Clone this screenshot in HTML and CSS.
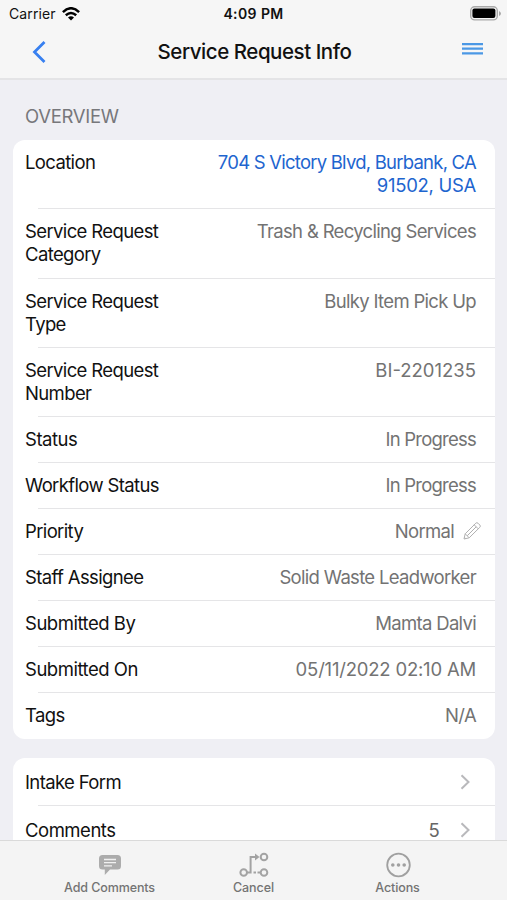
FILE: index.html
```html
<!DOCTYPE html>
<html lang="en">
<head>
<meta charset="utf-8">
<title>Service Request Info</title>
<link rel="stylesheet" href="styles.css">
</head>
<body>
<div class="app">
  <header class="top">
    <div class="status-bar">
      <div class="carrier"><span class="carrier-name">Carrier</span>
        <svg width="18" height="14" viewBox="0 0 18 14" fill="none" stroke="#000" stroke-width="2.5"><path d="M.9 5.1Q9-2.6 17.1 5.1M3.8 8.3Q9 3.8 14.2 8.300"/><path d="M6 10.500Q9 8 12 10.500L9 13.500Z" fill="#000" stroke="none"/></svg>
      </div>
      <span class="clock">4:09 PM</span>
      <svg class="battery" width="31" height="15" viewBox="0 0 31 15"><rect x=".7" y=".7" width="26.6" height="13.2" rx="4" fill="#f6f6f6" stroke="#a9a9a9" stroke-width="1.4"/><rect x="2.4" y="2.5" width="23" height="9.6" rx="2" fill="#000"/><path d="M29 5v5q2-1 2-2.5T29 5Z" fill="#a9a9a9"/></svg>
    </div>
    <div class="nav">
      <svg class="back" width="14" height="24" viewBox="0 0 14 24" fill="none" stroke="#3880f0" stroke-width="2.8"><path d="M12.500 2 2.500 12l10 10"/></svg>
      <h1 class="title">Service Request Info</h1>
      <svg class="menu" width="21" height="12" viewBox="0 0 21 12" fill="#4b98e5"><path d="M0 0h21v2.200H0zM0 4.600h21v2.200H0zM0 9.200h21v2.200H0z"/></svg>
    </div>
  </header>
  <main class="content">
    <h2 class="section">OVERVIEW</h2>
    <section class="card">
      <div class="row double"><span class="label">Location</span><a class="value link"><span class="tight">704 S Victory Blvd, Burbank, CA</span><br><span class="loose">91502, USA</span></a></div>
      <div class="row double"><span class="label">Service Request<br>Category</span><span class="value">Trash &amp; Recycling Services</span></div>
      <div class="row double"><span class="label">Service Request<br>Type</span><span class="value">Bulky Item Pick Up</span></div>
      <div class="row double"><span class="label">Service Request<br>Number</span><span class="value number">BI-2201235</span></div>
      <div class="row"><span class="label short">Status</span><span class="value tight">In Progress</span></div>
      <div class="row"><span class="label">Workflow Status</span><span class="value tight">In Progress</span></div>
      <div class="row"><span class="label">Priority</span><span class="value editable">Normal<svg width="18" height="18" viewBox="0 0 18 18" fill="none" stroke="#b0b0b0" stroke-width="1"><path d="M1 17l1.200-5.200L12.800 1.200q1-1 2.200 0l1.800 1.800q1.200 1.200 0 2.300L6.200 15.800ZM2.200 11.800l4 4M11.200 2.800l4 4M4.200 13.800 13.200 4.800M1.400 15.300l1.300 1.300"/></svg></span></div>
      <div class="row"><span class="label">Staff Assignee</span><span class="value">Solid Waste Leadworker</span></div>
      <div class="row"><span class="label short">Submitted By</span><span class="value">Mamta Dalvi</span></div>
      <div class="row"><span class="label short">Submitted On</span><span class="value date">05/11/2022 02:10 AM</span></div>
      <div class="row"><span class="label">Tags</span><span class="value">N/A</span></div>
    </section>
    <section class="card">
      <div class="row linkrow"><span class="label">Intake Form</span><svg class="chevron" width="10" height="16" viewBox="0 0 10 16"><path d="m1.500 1.200 7 6.800-7 6.800"/></svg></div>
      <div class="row linkrow"><span class="label short">Comments</span><span class="count">5</span><svg class="chevron" width="10" height="16" viewBox="0 0 10 16"><path d="m1.500 1.200 7 6.800-7 6.800"/></svg></div>
    </section>
  </main>
  <footer class="tabs">
    <div class="tab"><svg width="24" height="26" viewBox="0 0 24 26"><path d="M4.500 3h15Q23 3 23 6.500v7.500q0 3.500-3.500 3.500H12L6.800 23v-5.500H4.500Q1 17.500 1 14V6.500Q1 3 4.500 3Z" fill="#acacac"/><path d="M6 7.500h12M6 10.700h12M6 13.900h8" stroke="#f1f1f1" stroke-width="1.300"/></svg><span>Add Comments</span></div>
    <div class="tab"><svg width="30" height="26" viewBox="0 0 30 26" fill="none" stroke="#a3a3a3" stroke-width="2"><circle cx="4.700" cy="20.500" r="3.300"/><circle cx="25" cy="5" r="3.300"/><circle cx="25" cy="20.500" r="3.300"/><path d="M8 20.500h3.600V5H17M14.500 20.500h2.500M18.500 20.500h3"/><path d="m16 1.500 4.500 3.500-4.500 3.500Z" fill="#a3a3a3" stroke="none"/></svg><span>Cancel</span></div>
    <div class="tab"><svg width="26" height="26" viewBox="0 0 26 26"><circle cx="13.500" cy="13" r="11.300" fill="none" stroke="#a0a0a0" stroke-width="1.800"/><g fill="#a0a0a0"><circle cx="7.800" cy="13" r="1.800"/><circle cx="13.500" cy="13" r="1.800"/><circle cx="19.200" cy="13" r="1.800"/></g></svg><span>Actions</span></div>
  </footer>
</div>
</body>
</html>
```
FILE: styles.css
```css
* { box-sizing: border-box; }
body { margin: 0; font-family: Inter, "Liberation Sans", sans-serif; color: #111; }
.app { width: 507px; height: 900px; display: flex; flex-direction: column; background: #efeff4; overflow: hidden; }
.top { height: 80px; flex: none; background: #f6f6f6; border-bottom: 2px solid #e4e4e6; }
.status-bar { height: 27px; padding: 0 7px; display: grid; grid-template-columns: 1fr auto 1fr; align-items: center; }
.carrier { display: flex; align-items: center; gap: 6px; font-size: 14px; letter-spacing: .1px; padding-left: 2px; }
.clock { font-size: 14px; font-weight: 600; letter-spacing: .4px; }
.battery { justify-self: end; margin-right: -1px; }
.nav { height: 49px; padding: 0 24px; display: grid; grid-template-columns: 1fr auto 1fr; align-items: center; }
.back { margin-left: 8px; }
.title { margin: 0 -1px 0 1px; font-size: 20.500px; font-weight: 500; letter-spacing: -.45px; }
.menu { justify-self: end; margin-bottom: 6px; }
.content { flex: 1; min-height: 0; overflow: hidden; padding: 0 12px 0 13px; }
.section { margin: 0; height: 60px; padding: 24px 12px 0; font-size: 18.500px; line-height: 24px; font-weight: 400; color: #77777b; letter-spacing: -.3px; }
.card { background: #fff; border-radius: 12px; margin-bottom: 19px; overflow: hidden; }
.row { height: 46px; padding: 11px 19px 0 12px; display: flex; justify-content: space-between; font-size: 18.500px; line-height: 23px; letter-spacing: -.63px; white-space: nowrap; background: linear-gradient(#e5e5e7, #e5e5e7) 25px 100% / 100% 1px no-repeat; }
.row.double { height: 69.250px; line-height: 23.200px; }
.row:last-child { background: none; }
.label.short { letter-spacing: -.48px; }
.value { color: #737373; text-align: right; letter-spacing: -.68px; }
.value.link { color: #1e65cf; }
.tight, .value.tight { letter-spacing: -.77px; }
.loose { letter-spacing: -.3px; }
.value.number { letter-spacing: 0; }
.value.date { letter-spacing: -.2px; }
.editable { display: flex; gap: 9px; margin-right: -5px; }
.editable svg { margin-top: 2px; }
.row.linkrow { height: 48px; padding-top: 13px; padding-right: 25px; }
.count { margin-left: auto; margin-right: 21px; color: #666; }
.chevron { margin-top: 3px; fill: none; stroke: #b9b9bc; stroke-width: 2; }
.tabs { height: 60px; flex: none; display: grid; grid-template-columns: repeat(3, 144px); justify-content: center; background: #f4f4f4; border-top: 1px solid #dadada; }
.tab { display: flex; flex-direction: column; align-items: center; padding-top: 11px; gap: 1px; font-size: 12.500px; line-height: 17px; font-weight: 500; letter-spacing: -.1px; color: #737373; }
```
